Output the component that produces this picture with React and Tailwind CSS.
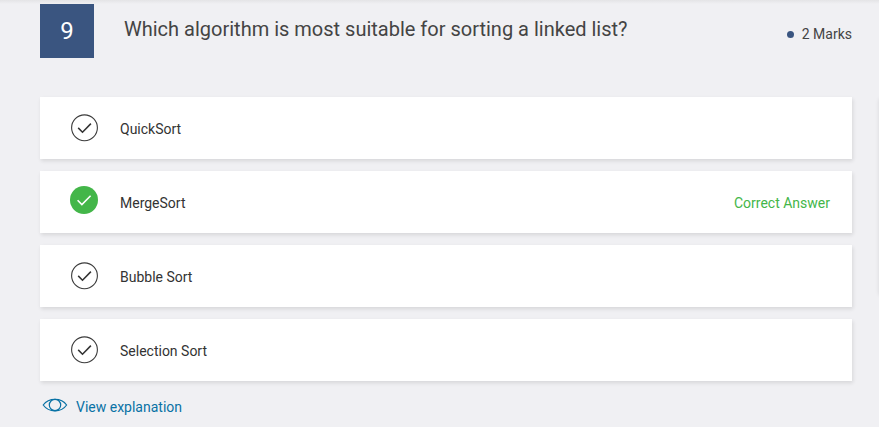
const options = [
  { label: "QuickSort" },
  { label: "MergeSort", correct: true },
  { label: "Bubble Sort" },
  { label: "Selection Sort" },
];

function CheckIcon({ correct }) {
  return correct ? (
    <svg className="mt-[15px] h-7 w-7 shrink-0" viewBox="0 0 28 28" fill="none">
      <circle cx="14" cy="14" r="14" fill="#43b649" />
      <path d="M7.6 14.2 11.9 18.6 20.6 9.8" stroke="#fff" strokeWidth="1.6" />
    </svg>
  ) : (
    <svg className="mt-[17px] h-7 w-7 shrink-0" viewBox="0 0 28 28" fill="none">
      <circle cx="14.5" cy="13.8" r="12.9" stroke="#3c3c3c" strokeWidth="1.1" />
      <path d="M8.2 13.9 12.500 18.200 20.900 9.600" stroke="#333" strokeWidth="1.55" />
    </svg>
  );
}

function Option({ label, correct }) {
  return (
    <li className="flex h-[62px] bg-white pr-[22px] pl-[30px] text-sm leading-5 shadow-[1px_2px_4px_rgba(0,0,0,0.11)]">
      <CheckIcon correct={correct} />
      <span className="mt-[22px] ml-[22px] text-[#333]">{label}</span>
      {correct && <span className="mt-[22px] ml-auto text-[#43b649]">Correct Answer</span>}
    </li>
  );
}

export default function App() {
  return (
    <div className="relative h-[427px] w-[879px] overflow-hidden bg-[#f0f0f3] font-['Roboto',sans-serif]">
      <div className="absolute inset-x-0 top-0 h-1 bg-gradient-to-b from-[#e4e4e6] to-[#f0f0f3]" />
      <div className="absolute top-[97px] left-[879px] h-[196px] w-4 shadow-[0_2px_4px_rgba(0,0,0,0.1)]" />
      <main className="relative w-[852px] pt-1 pl-10">
        <header className="flex h-[93px]">
          <div className="flex h-[54px] w-[54px] items-center justify-center bg-[#3a5580] text-2xl text-white">
            9
          </div>
          <h1 className="mt-[11px] ml-[30px] text-xl leading-7 text-[#444]">
            Which algorithm is most suitable for sorting a linked list?
          </h1>
          <div className="mt-5 ml-auto flex h-5 items-center text-sm text-[#444]">
            <span className="mr-2 h-[7px] w-[7px] rounded-full bg-[#3a5580]" />2 Marks
          </div>
        </header>
        <ul className="flex flex-col gap-3">
          {options.map((o) => (
            <Option key={o.label} {...o} />
          ))}
        </ul>
        <a className="mt-4 flex h-5 items-center text-sm text-[#0972a5]">
          <svg className="mr-2 ml-0.5 h-[16px] w-[26px] -translate-y-0.5" viewBox="0 0 26 16" fill="none" stroke="currentColor" strokeWidth="1.2">
            <path d="M1.2 8C4 4.200 8.500 2.300 13 2.300S22 4.200 24.600 8C22 11.900 17.500 13.800 13 13.800S4 11.900 1.200 8Z" />
            <circle cx="13" cy="8" r="5.700" />
          </svg>
          View explanation
        </a>
      </main>
    </div>
  );
}
